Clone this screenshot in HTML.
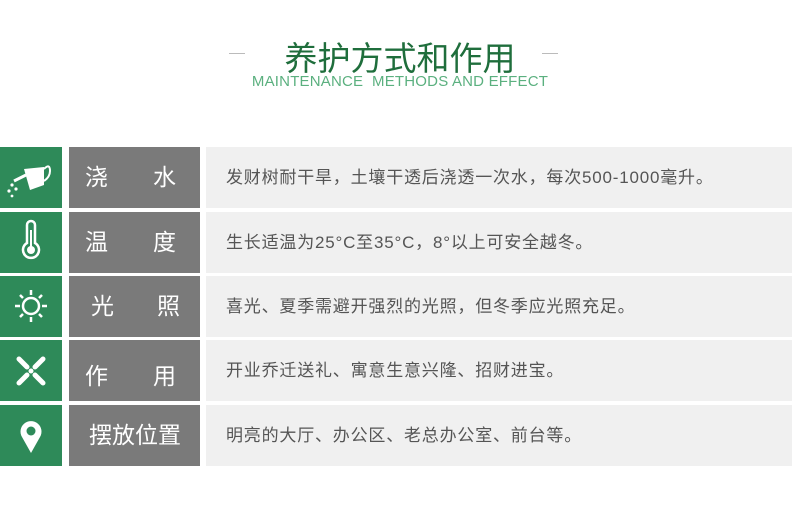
<!DOCTYPE html>
<html><head><meta charset="utf-8"><style>
body{margin:0;width:800px;height:519px;background:#fff;position:relative;overflow:hidden;font-family:"Liberation Sans","Noto Sans CJK SC",sans-serif}
.t{position:absolute;top:32px;left:0;width:800px;text-align:center;font-size:33px;color:#1f6e3c;letter-spacing:0px}
.s{position:absolute;top:73px;left:0;width:800px;text-align:center;font-size:15px;color:#5bb07f;letter-spacing:0.2px;white-space:pre}
.ln{position:absolute;top:53px;width:16px;height:1px;background:#bbb}
.g{position:absolute;left:0;width:62px;height:61px;background:#2e8a59}
.k{position:absolute;left:69px;width:131px;height:61px;background:#7a7a7a;color:#fff;font-size:23px;line-height:61px}
.c{position:absolute;left:206px;width:586px;height:61px;background:#f0f0f0;color:#555;font-size:17px;letter-spacing:0.8px;line-height:61px;padding-left:20px;box-sizing:border-box}
.g svg{position:absolute;left:0;top:0}
</style></head><body>
<div class="ln" style="left:229px"></div><div class="ln" style="left:542px"></div>
<div class="t">养护方式和作用</div>
<div class="s">MAINTENANCE  METHODS AND EFFECT</div>

<div class="g" style="top:147px"><svg width="62" height="61"><path d="M24 22 L44 20 L44 38 L30 43 Z" fill="#fff"/><path d="M44 22 Q50 16 50 24 Q50 30 44 34" fill="none" stroke="#fff" stroke-width="2"/><path d="M26 28 L14 34" stroke="#fff" stroke-width="3"/><circle cx="12" cy="38" r="1.6" fill="#fff"/><circle cx="16" cy="42" r="1.6" fill="#fff"/><circle cx="9" cy="44" r="1.6" fill="#fff"/><circle cx="12" cy="49" r="1.4" fill="#fff"/></svg></div>
<div class="k" style="top:147px"><span style="position:absolute;left:16px">浇</span><span style="position:absolute;left:84px">水</span></div>
<div class="c" style="top:147px">发财树耐干旱，土壤干透后浇透一次水，每次500-1000毫升。</div>

<div class="g" style="top:212px"><svg width="62" height="61"><path d="M27 31 V13 A4 4 0 0 1 35 13 V31 A8 8 0 1 1 27 31 Z" fill="none" stroke="#fff" stroke-width="2.5"/><circle cx="31" cy="38" r="4" fill="#fff"/><path d="M31 38 V18" stroke="#fff" stroke-width="2"/></svg></div>
<div class="k" style="top:212px"><span style="position:absolute;left:16px">温</span><span style="position:absolute;left:84px">度</span></div>
<div class="c" style="top:212px">生长适温为25°C至35°C，8°以上可安全越冬。</div>

<div class="g" style="top:276px"><svg width="62" height="61"><circle cx="31" cy="30" r="8" fill="none" stroke="#fff" stroke-width="2.5"/><g stroke="#fff" stroke-width="2.5"><path d="M31 14V19M31 41V46M15 30H20M42 30H47M20 19L23 22M39 38L42 41M20 41L23 38M39 22L42 19"/></g></svg></div>
<div class="k" style="top:276px"><span style="position:absolute;left:22px">光</span><span style="position:absolute;left:88px">照</span></div>
<div class="c" style="top:276px">喜光、夏季需避开强烈的光照，但冬季应光照充足。</div>

<div class="g" style="top:340px"><svg width="62" height="61"><g stroke="#fff" stroke-width="5" stroke-linecap="round"><path d="M19 19L27 27M35 35L43 43M43 19L35 27M27 35L19 43"/></g><circle cx="31" cy="31" r="2.5" fill="#fff"/></svg></div>
<div class="k" style="top:340px;line-height:72px"><span style="position:absolute;left:16px">作</span><span style="position:absolute;left:84px">用</span></div>
<div class="c" style="top:340px">开业乔迁送礼、寓意生意兴隆、招财进宝。</div>

<div class="g" style="top:405px"><svg width="62" height="61"><path d="M31 48 L22 32 A10.5 10.5 0 1 1 40 32 Z" fill="#fff"/><circle cx="31" cy="26" r="4.5" fill="#2e8a59"/></svg></div>
<div class="k" style="top:405px"><span style="position:absolute;left:20px">摆放位置</span></div>
<div class="c" style="top:405px">明亮的大厅、办公区、老总办公室、前台等。</div>
</body></html>
